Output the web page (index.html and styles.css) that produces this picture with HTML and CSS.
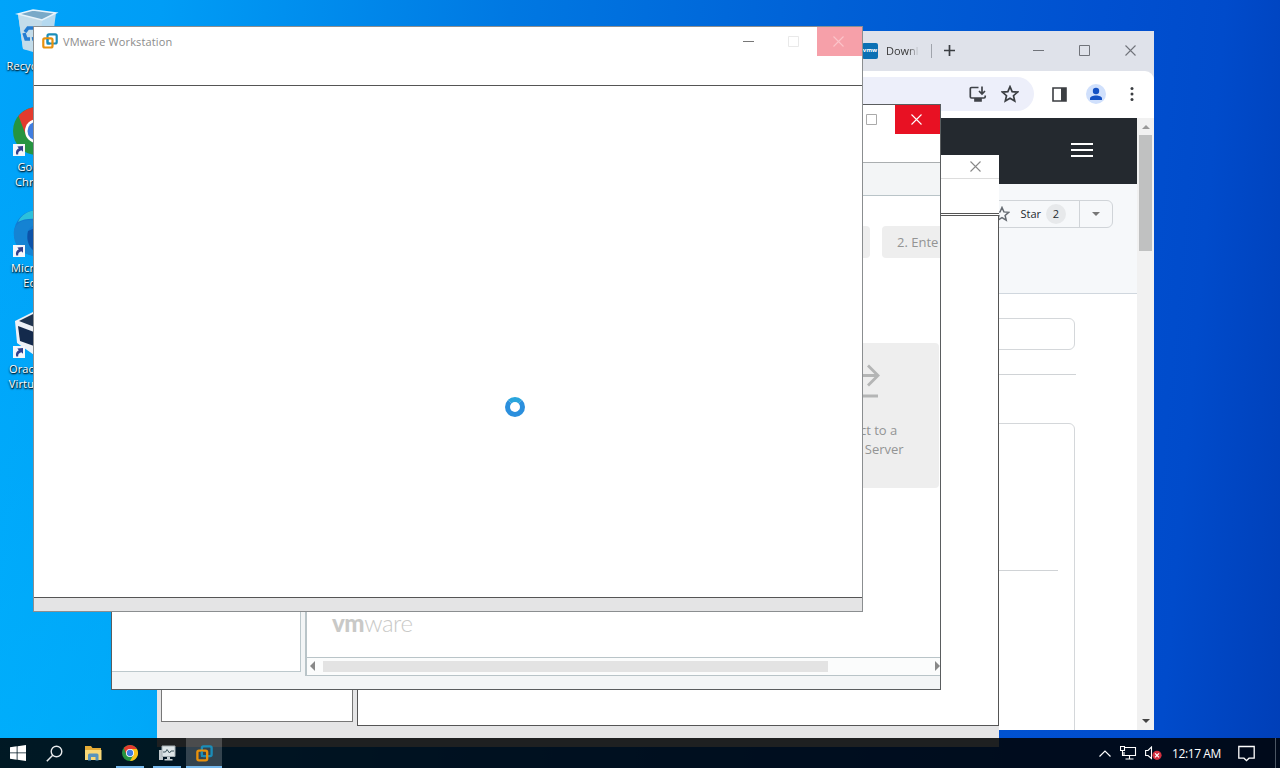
FILE: index.html
```html
<!DOCTYPE html>
<html lang="en">
<head>
    <meta charset="UTF-8">
    <meta name="viewport" content="width=device-width, initial-scale=1.0">
    <title>Desktop</title>
    <link rel="stylesheet" href="styles.css">
</head>
<body>
    <svg width="0" height="0" class="defs">
        <symbol id="shortcut" viewBox="0 0 12 12">
            <rect width="12" height="12" fill="#f4f6fb"/>
            <path d="M3.2 10.5C2.4 7.5 3.6 5.200 5.800 4.300L4.300 2.500L10 2V7.700L8.300 6.200C6 7 4.900 8.200 5.200 10.500Z" fill="#33408c"/>
        </symbol>
        <symbol id="chrome" viewBox="0 0 48 48">
            <circle cx="24" cy="24" r="24" fill="#259440"/>
            <path d="M24 12H44.800A24 24 0 0 1 24 48L34.400 30Z" fill="#fbc116"/>
            <path d="M13.600 30L5.500 8.800A24 24 0 0 1 44.800 12H24Z" fill="#e33b2e"/>
            <circle cx="24" cy="24" r="12" fill="#fff"/>
            <circle cx="24" cy="24" r="9.500" fill="#3f7de0"/>
        </symbol>
        <symbol id="vmware" viewBox="0 0 16 16">
            <rect x="5.500" y="1.300" width="9.200" height="9.200" rx="1.500" fill="none" stroke="#1b8db8" stroke-width="2.200"/>
            <rect x="1.300" y="5.300" width="9.200" height="9.200" rx="1.500" fill="none" stroke="#e8910c" stroke-width="2.200"/>
            <path d="M5.500 6V10.500H8" fill="none" stroke="#1b8db8" stroke-width="1.800"/>
        </symbol>
        <symbol id="min" viewBox="0 0 11 11"><path d="M0 5.500H11" stroke="currentColor"/></symbol>
        <symbol id="max" viewBox="0 0 11 11"><path d="M.5.5H10.500V10.500H.5Z" fill="none" stroke="currentColor"/></symbol>
        <symbol id="close" viewBox="0 0 11 11"><path d="M.5.5L10.500 10.500M10.500.5L.5 10.500" stroke="currentColor" stroke-width="1.100"/></symbol>
        <symbol id="star" viewBox="0 0 16 16"><path d="M8 1.500L9.900 5.900L14.700 6.300L11.100 9.500L12.200 14.200L8 11.700L3.800 14.200L4.900 9.500L1.300 6.300L6.100 5.900Z" fill="none" stroke="currentColor" stroke-width="1.500"/></symbol>
    </svg>

    <div class="desktop">
        <!-- Desktop icons -->
        <div class="icons">
            <div class="icon">
                <svg class="icon-img" viewBox="0 0 48 48">
                    <path d="M5 8L20 4L43 7L38 45L20 46L10 43Z" fill="#b5d9ef"/>
                    <path d="M5 8L29 14L27 46L10 43Z" fill="#c3dcea"/>
                    <path d="M5 8L20 4L43 7L29 14Z" fill="#79a9c8" stroke="#e7f3fb" stroke-width="1.500"/>
                    <g fill="none" stroke="#237cd2" stroke-width="3.500">
                        <path d="M12 26L15 22L21 22"/>
                        <path d="M11 27L13 33L17 33"/>
                        <path d="M19 33L24 32L23 26"/>
                    </g>
                </svg>
                <span>Recycle Bin</span>
            </div>
            <div class="icon">
                <svg class="icon-img" viewBox="0 0 48 48"><use href="#chrome"/></svg>
                <svg class="arrow"><use href="#shortcut"/></svg>
                <span>Google<br>Chrome</span>
            </div>
            <div class="icon">
                <svg class="icon-img" viewBox="0 0 48 48">
                    <circle cx="24" cy="25" r="23" fill="#127bd1"/>
                    <path d="M5 14C8 7 15 2 25 2C39 2 47 11 47 21C39 10 14 8 5 14Z" fill="#2cc0dc"/>
                    <path d="M1 22C5 10 21 10 27 16C17 16 12 24 15 34C17 41 22 46 29 48C9 50-1 37 1 22Z" fill="#1583d3"/>
                    <path d="M15 23C12 37 20 45 31 47C38 45 42 42 44 38C30 42 20 34 22 20Z" fill="#0c52a8"/>
                </svg>
                <svg class="arrow"><use href="#shortcut"/></svg>
                <span>Microsoft<br>Edge</span>
            </div>
            <div class="icon">
                <svg class="icon-img" viewBox="0 0 48 48">
                    <path d="M2 12L24 1L46 10V32L24 48L4 34Z" fill="#eef1f6"/>
                    <path d="M6 12L24 3L42 11L24 19Z" fill="#20344f"/>
                    <path d="M5 17L21 23V37L7 32Z" fill="#142a4c"/>
                    <path d="M27 22L44 15V30L27 39Z" fill="#142a4c"/>
                </svg>
                <svg class="arrow"><use href="#shortcut"/></svg>
                <span>Oracle VM<br>VirtualBox</span>
            </div>
        </div>

        <!-- Browser -->
        <div class="window browser">
            <div class="tabs">
                <span class="favicon">vmw</span>
                <span class="tab-title">Downl</span>
                <span class="tab-sep"></span>
                <svg class="plus" viewBox="0 0 11 11"><path d="M5.500 0V11M0 5.500H11" stroke="#3a3d42" stroke-width="1.700"/></svg>
                <div class="controls">
                    <svg><use href="#min"/></svg>
                    <svg><use href="#max"/></svg>
                    <svg><use href="#close"/></svg>
                </div>
            </div>
            <div class="toolbar">
                <div class="omnibox">
                    <svg width="18" height="18" viewBox="0 0 18 18"><path d="M9.500 2.500H2.500Q1.300 2.500 1.300 3.700V11.800Q1.300 13 2.500 13H15Q16.200 13 16.200 11.800V10.500M6 14.500H12V16H6ZM13 1.500V8.500M10 6L13 9L16 6" fill="none" stroke="#3f4248" stroke-width="1.700"/></svg>
                    <svg width="18" height="18" class="dark"><use href="#star"/></svg>
                </div>
                <svg class="panel" viewBox="0 0 15 15"><path d="M1 1H14V14H1Z" fill="none" stroke="#3b3e42" stroke-width="1.600"/><path d="M9 1H14V14H9Z" fill="#3b3e42"/></svg>
                <svg class="profile" viewBox="0 0 20 20"><circle cx="10" cy="10" r="10" fill="#d0e0fc"/><circle cx="10" cy="7" r="3.200" fill="#1451c4"/><path d="M4 16V14.500C4 10.500 16 10.500 16 14.500V16Z" fill="#1451c4"/></svg>
                <svg class="dots" viewBox="0 0 4 16"><g fill="#3b3e42"><circle cx="2" cy="2.500" r="1.500"/><circle cx="2" cy="8" r="1.500"/><circle cx="2" cy="13.500" r="1.500"/></g></svg>
            </div>
            <div class="viewport">
                <div class="page">
                    <div class="page-header">
                        <svg width="22" height="16" viewBox="0 0 22 16"><path d="M0 2H22M0 8H22M0 14H22" stroke="#fff" stroke-width="2"/></svg>
                    </div>
                    <div class="repo-head">
                        <div class="star-btn">
                            <div class="star-main">
                                <svg width="16" height="16"><use href="#star"/></svg>
                                <span>Star</span>
                                <span class="count">2</span>
                            </div>
                            <div class="star-more"><i class="caret"></i></div>
                        </div>
                    </div>
                    <div class="page-body">
                        <div class="field"></div>
                        <div class="rule"></div>
                        <div class="box"><div class="box-rule"></div></div>
                    </div>
                </div>
                <div class="scrollbar">
                    <i class="up"></i>
                    <div class="thumb"></div>
                    <i class="down"></i>
                </div>
            </div>
        </div>

        <!-- Back window -->
        <div class="window back">
            <div class="back-title"><svg width="11" height="11"><use href="#close"/></svg></div>
            <div class="back-menu"></div>
            <div class="back-panes">
                <div class="back-left"></div>
                <div class="back-right"></div>
            </div>
        </div>

        <!-- Middle window -->
        <div class="window middle">
            <div class="title">
                <div class="controls">
                    <span><svg class="pale"><use href="#max"/></svg></span>
                    <span class="close red"><svg><use href="#close"/></svg></span>
                </div>
            </div>
            <div class="mid-toolbar"></div>
            <div class="mid-panes">
                <div class="mid-left"></div>
                <div class="mid-right">
                    <div class="home">
                        <div class="steps">
                            <div class="step"></div>
                            <div class="step last">2. Ente</div>
                        </div>
                        <div class="card">
                            <svg width="42" height="42" viewBox="0 0 42 42"><path d="M5 13.500H40M30 3.500L40 13.500L30 23.500M5 34H40" fill="none" stroke="#b4b5b5" stroke-width="2.800"/></svg>
                            <p>Connect to a<br>Remote Server</p>
                        </div>
                        <div class="logo"><b>vm</b>ware</div>
                    </div>
                    <div class="hscroll">
                        <i class="left"></i>
                        <div class="hthumb"></div>
                        <i class="right"></i>
                    </div>
                </div>
            </div>
        </div>

        <!-- Front window -->
        <div class="window front">
            <div class="title">
                <svg class="app-icon"><use href="#vmware"/></svg>
                <span class="app-name">VMware Workstation</span>
                <div class="controls">
                    <span><svg><use href="#min"/></svg></span>
                    <span><svg class="faint"><use href="#max"/></svg></span>
                    <span class="close pink"><svg><use href="#close"/></svg></span>
                </div>
            </div>
            <div class="content"><div class="spinner"></div></div>
            <div class="status"></div>
        </div>

        <!-- Taskbar -->
        <div class="taskbar">
            <div class="task"><svg width="16" height="16" viewBox="0 0 16 16"><path d="M0 2.300L6.700 1.300V7.500H0ZM7.500 1.200L16 0V7.500H7.500ZM0 8.300H6.700V14.700L0 13.700ZM7.500 8.300H16V16L7.500 14.800Z" fill="#fff"/></svg></div>
            <div class="task"><svg width="17" height="17" viewBox="0 0 17 17"><circle cx="10.500" cy="6.500" r="5.300" fill="none" stroke="#e8eaec" stroke-width="1.400"/><path d="M6.700 10.300L.8 16.200" stroke="#e8eaec" stroke-width="1.500"/></svg></div>
            <div class="task"><svg width="17" height="15" viewBox="0 0 17 15"><path d="M0 0H6L7.500 2H16V14H0Z" fill="#e5ac37"/><path d="M0 4H16.500V14H0Z" fill="#f9d877"/><path d="M3 14.500V9Q3 7.500 4.500 7.500H12Q13.500 7.500 13.500 9V14.500H10.500V11H6V14.500Z" fill="#5793bd"/></svg></div>
            <div class="task open"><svg width="16" height="16"><use href="#chrome"/></svg></div>
            <div class="task open"><svg width="17" height="16" viewBox="0 0 17 16"><path d="M0 5H4V15H0Z" fill="#bfc7cb"/><path d="M3 1H16V11.500H3Z" fill="#dde5e8" stroke="#a3adb1"/><path d="M8 12H11V14H13.500V15.500H5.500V14H8Z" fill="#c7cfd2"/><path d="M4 7H6.500L8 4.500L10.500 8L12 6H15" fill="none" stroke="#3e555c"/></svg></div>
            <div class="task open active"><svg width="17" height="17"><use href="#vmware"/></svg></div>
            <div class="tray">
                <svg width="12" height="7" viewBox="0 0 12 7"><path d="M.5 6.500L6 1L11.500 6.500" fill="none" stroke="#fff" stroke-width="1.200"/></svg>
                <svg width="17" height="14" viewBox="0 0 17 14"><path d="M5 1.500H15.500V9.500H4V6M9.500 9.500V13M5.500 13H13.500M.5.5H4.500V4.500H.5ZM2.500 4.500V9.500H4" fill="none" stroke="#fff" stroke-width="1.100"/></svg>
                <svg width="17" height="14" viewBox="0 0 17 14"><path d="M.6 4.500H3L6.500 1V12.500L3 9.500H.6Z" fill="none" stroke="#fff" stroke-width="1.100"/><circle cx="12" cy="9.300" r="4.600" fill="#d3303f"/><path d="M10 7.300L14 11.300M14 7.300L10 11.300" stroke="#fff" stroke-width="1.200"/></svg>
                <span class="clock">12:17 AM</span>
                <svg class="note" width="17" height="17" viewBox="0 0 17 17"><path d="M.8 1.500H16.200V13.200H11L8.500 15.700L6 13.200H.8Z" fill="none" stroke="#fff" stroke-width="1.300"/></svg>
            </div>
        </div>
    </div>
</body>
</html>
```

FILE: styles.css
```css
* {
    box-sizing: border-box;
}

body {
    margin: 0;
    font-family: "Open Sans", "Noto Sans", sans-serif;
    font-size: 11px;
    overflow: hidden;
}

svg {
    display: block;
    flex: none;
}

.defs {
    position: absolute;
}

.desktop {
    position: relative;
    width: 1280px;
    height: 768px;
    overflow: hidden;
    background:
        linear-gradient(0deg, rgba(0, 190, 255, 0.45), transparent 85%) 0 0 / 160px 100% no-repeat,
        linear-gradient(95deg, #00a4fa 0%, #009df6 12%, #0078e2 38%, #0060d6 62%, #0050d0 82%, #004bcb 91%, #003fb8 100%);
}

/* Desktop icons */
.icons {
    width: 74px;
    padding-top: 6px;
}

.icon {
    position: relative;
    height: 101px;
    display: flex;
    flex-direction: column;
    align-items: center;
    color: #fff;
    text-align: center;
    line-height: 15px;
    letter-spacing: 0.15px;
    white-space: nowrap;
    text-shadow: 0 1px 2px #000, 1px 1px 1px rgba(0, 0, 0, 0.6);
}

.icon span {
    margin-left: -2px;
}

.icon-img {
    width: 48px;
    height: 48px;
    margin-bottom: 4px;
}

.arrow {
    position: absolute;
    left: 13px;
    top: 37px;
    width: 12px;
    height: 12px;
}

/* Windows */
.window {
    position: absolute;
    display: flex;
    flex-direction: column;
    overflow: hidden;
    background: #fff;
}

.controls {
    display: flex;
    margin-left: auto;
}

.controls svg {
    width: 11px;
    height: 11px;
}

.title {
    display: flex;
    flex: none;
    align-items: flex-start;
    height: 58px;
}

.title .controls span {
    display: flex;
    align-items: center;
    justify-content: center;
    width: 45px;
    height: 29px;
    padding-right: 2px;
    color: #777;
}

.title .controls .faint {
    color: #e9e9e9;
}

.title .controls .pale {
    color: #aaa;
}

.title .controls .close {
    color: #fff;
}

.title .controls .red {
    background: #e81123;
}

.title .controls .pink {
    color: #fbc4ca;
    background: #f6a0a9;
}

/* Browser */
.browser {
    left: 650px;
    top: 31px;
    width: 504px;
    height: 699px;
    background: #dfe2ea;
}

.tabs {
    display: flex;
    flex: none;
    align-items: center;
    height: 40px;
    padding: 0 0 1px 212px;
}

.favicon {
    width: 16px;
    height: 16px;
    background: #0b70b4;
    color: #fff;
    font-size: 6px;
    font-weight: bold;
    line-height: 15px;
    text-align: center;
    border-radius: 2px;
}

.tab-title {
    width: 34px;
    margin-left: 8px;
    overflow: hidden;
    color: transparent;
    background: linear-gradient(90deg, #333 65%, #dfe2ea 98%);
    background-clip: text;
}

.tab-sep {
    width: 1px;
    height: 14px;
    margin: 0 12px 0 11px;
    background: #a0a4ac;
}

.plus {
    width: 11px;
    height: 11px;
}

.browser .controls {
    gap: 35px;
    padding-right: 18px;
    color: #70737a;
}

.toolbar {
    display: flex;
    flex: none;
    align-items: center;
    height: 47px;
    padding-bottom: 1px;
    background: #fff;
    border-radius: 0 9px 0 0;
}

.omnibox {
    display: flex;
    align-items: center;
    justify-content: flex-end;
    gap: 14px;
    width: 384px;
    height: 34px;
    padding-right: 15px;
    margin-right: 18px;
    background: #edeffa;
    border-radius: 0 17px 17px 0;
}

.dark {
    color: #3b3e42;
}

.panel {
    width: 15px;
    height: 15px;
}

.profile {
    width: 20px;
    height: 20px;
    margin: 0 24px 0 19px;
}

.dots {
    width: 4px;
    height: 16px;
}

.viewport {
    display: flex;
    flex: 1;
    min-height: 0;
}

.page {
    width: 487px;
    background: #fff;
}

.page-header {
    display: flex;
    align-items: center;
    justify-content: flex-end;
    height: 66px;
    padding: 0 44px 2px 0;
    background: #24292f;
}

.repo-head {
    display: flex;
    justify-content: flex-end;
    height: 110px;
    padding: 16px 24px 0 0;
    background: #f6f8fa;
    border-bottom: 1px solid #d0d7de;
}

.star-btn {
    display: flex;
    height: 28px;
    border: 1px solid #d0d4d8;
    border-radius: 6px;
    color: #24292f;
}

.star-main {
    display: flex;
    align-items: center;
    padding: 0 13px 1px 12px;
}

.star-main svg {
    margin-right: 10px;
    color: #656b72;
}

.count {
    width: 20px;
    height: 20px;
    margin-left: 5px;
    line-height: 20px;
    text-align: center;
    background: #e7e9eb;
    border-radius: 10px;
}

.star-more {
    display: flex;
    align-items: center;
    justify-content: center;
    width: 33px;
    border-left: 1px solid #d0d4d8;
}

.caret {
    border: 4px solid transparent;
    border-top-color: #777;
    border-bottom: 0;
}

.page-body {
    padding: 24px 62px 0 24px;
}

.field {
    height: 32px;
    border: 1px solid #d4d7da;
    border-radius: 6px;
}

.rule {
    height: 1px;
    margin: 24px -1px 48px 0;
    background: #d0d3d6;
}

.box {
    height: 400px;
    padding: 146px 16px 0;
    border: 1px solid #d4d7da;
    border-radius: 6px;
}

.box-rule {
    height: 1px;
    background: #d0d3d6;
}

.scrollbar {
    display: flex;
    flex-direction: column;
    align-items: center;
    width: 17px;
    background: #f1f1f1;
}

.up {
    margin: 7px 0 6px;
    border: 4px solid transparent;
    border-bottom-color: #999;
    border-top: 0;
}

.thumb {
    width: 13px;
    height: 116px;
    background: #c0c1c1;
}

.down {
    margin: auto 0 7px;
    border: 4px solid transparent;
    border-top-color: #444;
    border-bottom: 0;
}

/* Back window */
.back {
    left: 157px;
    top: 155px;
    width: 842px;
    height: 592px;
    background: #e5e5e6;
}

.back-title {
    display: flex;
    flex: none;
    align-items: center;
    justify-content: flex-end;
    height: 24px;
    padding-right: 18px;
    color: #888;
    background: #fff;
    border-bottom: 1px solid #ddd;
}

.back-menu {
    flex: none;
    height: 37px;
    margin-bottom: -1px;
    background: #fff;
    border-bottom: 3px double #555;
}

.back-panes {
    display: flex;
    gap: 4px;
    padding-left: 4px;
}

.back-left {
    width: 192px;
    height: 507px;
    background: #fff;
    border: 1px solid #777;
}

.back-right {
    flex: 1;
    height: 511px;
    background: #fff;
    border: 1px solid #555;
}

/* Middle window */
.middle {
    left: 111px;
    top: 104px;
    width: 830px;
    height: 586px;
    border: 1px solid #5a5d5f;
    background: #f3f5f6;
}

.middle .title {
    background: #fff;
    border-bottom: 1px solid #aaaeb0;
}

.mid-toolbar {
    flex: none;
    height: 32px;
}

.mid-panes {
    display: flex;
    gap: 4px;
    height: 481px;
}

.mid-left {
    width: 189px;
    height: 477px;
    background: #fff;
    border: 1px solid #bcc8cc;
    border-left: 0;
}

.mid-right {
    display: flex;
    flex-direction: column;
    flex: 1;
    min-width: 0;
    background: #fff;
    border: 1px solid #b9c4c8;
    border-width: 1px 0 1px 2px;
}

.home {
    display: flex;
    flex-direction: column;
    align-items: flex-end;
    height: 461px;
    padding-top: 30px;
    color: #939494;
    font-size: 13px;
    overflow: hidden;
}

.steps {
    display: flex;
    flex: none;
    gap: 12px;
}

.step {
    width: 119px;
    height: 32px;
    line-height: 32px;
    background: #eee;
    border-radius: 4px;
}

.step.last {
    width: 58px;
    padding-left: 15px;
    border-radius: 4px 0 0 4px;
    white-space: nowrap;
}

.card {
    display: flex;
    flex: none;
    flex-direction: column;
    align-items: center;
    width: 162px;
    height: 145px;
    margin: 85px 1px 0 0;
    padding: 19px 0 0 2px;
    background: #eee;
    border-radius: 4px;
}

.card p {
    margin: 17px 0 0;
    line-height: 19px;
    text-align: center;
}

.logo {
    align-self: flex-start;
    margin: 120px 0 0 25px;
    color: #c9c9c7;
    font-family: Lato, sans-serif;
    font-size: 24px;
    font-weight: 300;
    line-height: 30px;
    letter-spacing: -0.45px;
}

.logo b {
    font-weight: 900;
}

.hscroll {
    display: flex;
    flex: 1;
    align-items: center;
    padding: 0 0 1px 3px;
    background: #fbfcfc;
    border-top: 1px solid #b9c4c8;
}

.left {
    margin-right: 8px;
    border: 5px solid transparent;
    border-right-color: #888;
    border-left: 0;
}

.hthumb {
    width: 505px;
    height: 11px;
    background: #e3e3e3;
}

.right {
    margin-left: auto;
    border: 5px solid transparent;
    border-left-color: #888;
    border-right: 0;
}

/* Front window */
.front {
    left: 33px;
    top: 26px;
    width: 830px;
    height: 586px;
    border: 1px solid #8b8e90;
}

.app-icon {
    width: 16px;
    height: 16px;
    margin: 6px 5px 0 8px;
}

.app-name {
    margin-top: 7px;
    color: #8c8c8c;
    line-height: 16px;
    letter-spacing: 0.13px;
}

.content {
    display: flex;
    flex: 1;
    border: 1px solid #555;
    border-width: 1px 0;
}

.spinner {
    width: 20px;
    height: 20px;
    margin: 311px 0 0 471px;
    border: 5px solid #2b8fdd;
    border-top-color: #29a5dd;
    border-radius: 50%;
}

.status {
    height: 13px;
    background: #e4e4e5;
}

/* Taskbar */
.taskbar {
    position: absolute;
    left: 0;
    bottom: 0;
    display: flex;
    width: 1280px;
    height: 30px;
    padding-right: 4px;
    color: #fff;
    background: rgba(0, 2, 3, 0.87);
}

.task {
    display: flex;
    align-items: center;
    justify-content: center;
    width: 28px;
    margin-right: 9px;
    padding-top: 2px;
    border-bottom: 2px solid transparent;
}

.task:first-child {
    margin-left: 4px;
    margin-right: 8px;
}

.task:nth-child(3) {
    margin-left: 2px;
}

.task.open {
    border-bottom-color: #76b9ed;
}

.task.active {
    width: 36px;
    margin-left: -4px;
    background: rgba(255, 255, 255, 0.2);
    background-clip: padding-box;
}

.tray {
    display: flex;
    align-items: center;
    gap: 8px;
    margin-left: auto;
    padding-right: 20px;
    border-right: 1px solid #4b5663;
}

.tray svg:nth-child(2) {
    margin-left: 1px;
}

.clock {
    width: 49px;
    margin-left: 2px;
    font-size: 12px;
    letter-spacing: -0.4px;
    white-space: nowrap;
}

.note {
    margin-left: 9px;
}
```
